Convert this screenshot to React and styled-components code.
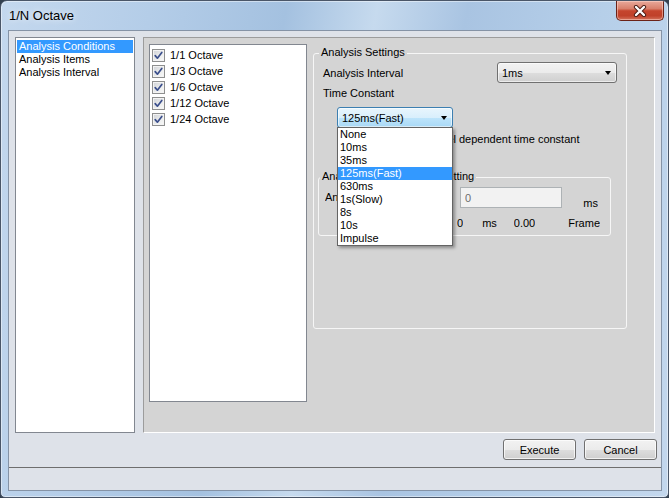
import React from 'react';
import styled, { createGlobalStyle } from 'styled-components';

const Global = createGlobalStyle`
  html, body { margin: 0; padding: 0; background: #33404f; }
  body {
    width: 669px; height: 498px; overflow: hidden;
    font-family: "Liberation Sans", Arial, sans-serif;
    font-size: 11px; color: #000;
  }
  * { box-sizing: border-box; }
`;

const Window = styled.div`
  width: 669px;
  height: 498px;
  border: 1px solid #4a5668;
  border-radius: 7px 7px 5px 5px;
  background: linear-gradient(100deg, #c4d8ee 0%, #b4cde8 20%, #a4c1e0 38%, #c6daee 50%, #a9c4e2 62%, #b6cfe9 80%, #c3d7ed 100%);
  box-shadow: inset 0 0 0 1px rgba(255, 255, 255, 0.45);
  display: flex;
  flex-direction: column;
  overflow: hidden;
`;

const TitleBar = styled.div`
  height: 29px;
  display: flex;
  justify-content: space-between;
  align-items: flex-start;
  padding: 0 4px 0 8px;
`;

const Title = styled.div`
  font-size: 13px;
  line-height: 15px;
  margin-top: 7px;
  color: #000;
  text-shadow: 0 0 6px rgba(255, 255, 255, 0.9);
`;

const CloseButton = styled.div`
  width: 48px;
  height: 20px;
  border: 1px solid #6b2218;
  border-top: none;
  border-radius: 0 0 5px 5px;
  background: linear-gradient(#e9a99b 0%, #d9806c 40%, #c5452d 52%, #c0412a 78%, #d4735c 100%);
  box-shadow: inset 0 0 0 1px rgba(255, 220, 210, 0.5);
  display: flex;
  align-items: center;
  justify-content: center;
`;

const Client = styled.div`
  margin: 0 6px 0 7px;
  height: 461px;
  border: 1px solid #8593a6;
  background: #dee2e9;
  display: flex;
  flex-direction: column;
`;

const Main = styled.div`
  display: flex;
  gap: 8px;
  padding: 6px 6px 0 6px;
  height: 402px;
`;

const NavList = styled.div`
  width: 120px;
  height: 396px;
  border: 1px solid #828790;
  background: #fff;
  padding: 2px 1px;
`;

const NavItem = styled.div`
  height: 13px;
  line-height: 13px;
  padding-left: 2px;
  white-space: nowrap;
  background: ${p => (p.$selected ? '#3399ff' : 'transparent')};
  color: ${p => (p.$selected ? '#fff' : '#000')};
`;

const Panel = styled.div`
  flex: 1;
  height: 396px;
  background: #d4d4d4;
  border-top: 1px solid #9c9c9c;
  border-left: 1px solid #9c9c9c;
  border-right: 1px solid #fff;
  border-bottom: 1px solid #fff;
  display: flex;
  align-items: flex-start;
  gap: 6px;
  padding: 6px 0 0 5px;
`;

const CheckList = styled.div`
  width: 158px;
  height: 358px;
  border: 1px solid #828790;
  background: #fff;
  padding: 2px 2px;
`;

const CheckRow = styled.div`
  display: flex;
  align-items: center;
  gap: 5px;
  height: 16px;
  white-space: nowrap;
`;

const Box = styled.span`
  width: 13px;
  height: 13px;
  flex: none;
  border: 1px solid #8e8f8f;
  background: linear-gradient(135deg, #cfd2d7 0%, #eceded 60%, #fafafa 100%);
  box-shadow: inset 0 0 0 1px #f3f3f3;
  display: flex;
  align-items: center;
  justify-content: center;
`;

const CheckBox = ({ checked }) => (
  <Box>
    {checked && (
      <svg width="11" height="11" viewBox="0 0 11 11">
        <path d="M2.2 5.6 L4.4 8.2 L8.8 2.4" fill="none" stroke="#3b4f8c" strokeWidth="1.7" strokeLinecap="round" strokeLinejoin="round" />
      </svg>
    )}
  </Box>
);

const GroupBox = styled.div`
  position: relative;
  width: ${p => p.$w}px;
  height: ${p => p.$h}px;
  margin-top: ${p => p.$mt}px;
  border: 1px solid #f6f6f6;
  border-radius: 3px;
  padding: ${p => p.$pad};
`;

const Legend = styled.span`
  position: absolute;
  top: -8px;
  left: ${p => p.$left}px;
  padding: 0 2px;
  line-height: 13px;
  background: #d4d4d4;
  white-space: nowrap;
`;

const FieldRow = styled.div`
  display: flex;
  justify-content: space-between;
  align-items: center;
  height: 21px;
  padding-left: 5px;
`;

const Label = styled.div`
  line-height: 13px;
  padding-left: 5px;
  margin-top: ${p => p.$mt || 0}px;
  white-space: nowrap;
`;

const ComboWrap = styled.div`
  position: relative;
  width: ${p => p.$w}px;
  margin: ${p => p.$m || 0};
`;

const Combo = styled.div`
  height: 21px;
  width: 100%;
  border: 1px solid ${p => (p.$focused ? '#3c7fb1' : '#707070')};
  border-radius: 3px;
  background: ${p =>
    p.$focused
      ? 'linear-gradient(#e8f5fd 0%, #d9effc 50%, #bde4fb 52%, #a9d9f6 100%)'
      : 'linear-gradient(#f2f2f2 0%, #ebebeb 50%, #dddddd 52%, #cfcfcf 100%)'};
  box-shadow: inset 0 0 0 1px rgba(255, 255, 255, 0.6);
  display: flex;
  align-items: center;
  justify-content: space-between;
  padding: 0 5px 0 4px;
  white-space: nowrap;
`;

const Arrow = styled.span`
  width: 0;
  height: 0;
  border-left: 3.5px solid transparent;
  border-right: 3.5px solid transparent;
  border-top: 4px solid #000;
`;

const DropList = styled.div`
  position: absolute;
  top: 20px;
  left: 0;
  width: 100%;
  border: 1px solid #646464;
  background: #fff;
  box-shadow: 2px 2px 3px rgba(0, 0, 0, 0.35);
  z-index: 10;
`;

const DropItem = styled.div`
  height: 13px;
  line-height: 13px;
  padding-left: 2px;
  white-space: nowrap;
  background: ${p => (p.$selected ? '#3399ff' : '#fff')};
  color: ${p => (p.$selected ? '#fff' : '#000')};
`;

const OptionRow = styled.div`
  display: flex;
  align-items: center;
  gap: 5px;
  height: 14px;
  margin-top: 4px;
  padding-left: 27px;
  white-space: nowrap;
`;

const Row = styled.div`
  display: flex;
  align-items: flex-start;
  margin-top: ${p => p.$mt || 0}px;
  padding-left: ${p => p.$pl || 0}px;
  line-height: 13px;
`;

const Cell = styled.span`
  width: ${p => (p.$w ? `${p.$w}px` : 'auto')};
  margin-top: ${p => p.$mt || 0}px;
  margin-left: ${p => p.$ml || '0'};
  margin-right: ${p => p.$mr || 0}px;
  white-space: nowrap;
  overflow: hidden;
`;

const Input = styled.input`
  width: 102px;
  height: 21px;
  border: 1px solid #adb2b5;
  background: #f2f2f2;
  color: #6d6d6d;
  font: inherit;
  padding: 0 4px;
  margin: 0;
  outline: none;
`;

const ButtonRow = styled.div`
  display: flex;
  justify-content: flex-end;
  gap: 8px;
  padding: 6px 4px 0 0;
`;

const Button = styled.div`
  width: 73px;
  height: 21px;
  border: 1px solid #707070;
  border-radius: 3px;
  background: linear-gradient(#f2f2f2 0%, #ebebeb 50%, #dddddd 52%, #cfcfcf 100%);
  box-shadow: inset 0 0 0 1px rgba(255, 255, 255, 0.7);
  display: flex;
  align-items: center;
  justify-content: center;
`;

const StatusBar = styled.div`
  margin-top: auto;
  height: 23px;
  border-top: 1px solid #6e6e6e;
`;

const octaves = ['1/1 Octave', '1/3 Octave', '1/6 Octave', '1/12 Octave', '1/24 Octave'];
const constants = ['None', '10ms', '35ms', '125ms(Fast)', '630ms', '1s(Slow)', '8s', '10s', 'Impulse'];

export default function App() {
  return (
    <>
      <Global />
      <Window>
        <TitleBar>
          <Title>1/N Octave</Title>
          <CloseButton>
            <svg width="14" height="12" viewBox="0 0 14 12">
              <path d="M3 2 L11 10 M11 2 L3 10" stroke="#4a1a12" strokeWidth="4.2" strokeLinecap="round" />
              <path d="M3 2 L11 10 M11 2 L3 10" stroke="#fff" strokeWidth="2.4" strokeLinecap="round" />
            </svg>
          </CloseButton>
        </TitleBar>
        <Client>
          <Main>
            <NavList>
              <NavItem $selected>Analysis Conditions</NavItem>
              <NavItem>Analysis Items</NavItem>
              <NavItem>Analysis Interval</NavItem>
            </NavList>
            <Panel>
              <CheckList>
                {octaves.map(o => (
                  <CheckRow key={o}>
                    <CheckBox checked />
                    <span>{o}</span>
                  </CheckRow>
                ))}
              </CheckList>
              <GroupBox $w={314} $h={276} $mt={9} $pad="8px 9px 0 4px">
                <Legend $left={5}>Analysis Settings</Legend>
                <FieldRow>
                  <span>Analysis Interval</span>
                  <ComboWrap $w={120}>
                    <Combo>
                      <span>1ms</span>
                      <Arrow />
                    </Combo>
                  </ComboWrap>
                </FieldRow>
                <Label $mt={4}>Time Constant</Label>
                <ComboWrap $w={116} $m="7px 0 0 19px">
                  <Combo $focused>
                    <span>125ms(Fast)</span>
                    <Arrow />
                  </Combo>
                  <DropList>
                    {constants.map(c => (
                      <DropItem key={c} $selected={c === '125ms(Fast)'}>{c}</DropItem>
                    ))}
                  </DropList>
                </ComboWrap>
                <OptionRow>
                  <CheckBox />
                  <span>Use 1/N band level dependent time constant</span>
                </OptionRow>
                <GroupBox $w={293} $h={59} $mt={31} $pad="9px 10px 0 6px">
                  <Legend $left={1}>Analysis Interval Frame Setting</Legend>
                  <Row>
                    <Cell $w={135} $mt={4}>Analysis Frame</Cell>
                    <Input value="0" disabled readOnly />
                    <Cell $ml="auto" $mt={10} $mr={2}>ms</Cell>
                  </Row>
                  <Row $mt={7} $pl={132}>
                    <Cell>0</Cell>
                    <Cell $ml="19px">ms</Cell>
                    <Cell $ml="17px">0.00</Cell>
                    <Cell $ml="auto">Frame</Cell>
                  </Row>
                </GroupBox>
              </GroupBox>
            </Panel>
          </Main>
          <ButtonRow>
            <Button>Execute</Button>
            <Button>Cancel</Button>
          </ButtonRow>
          <StatusBar />
        </Client>
      </Window>
    </>
  );
}
